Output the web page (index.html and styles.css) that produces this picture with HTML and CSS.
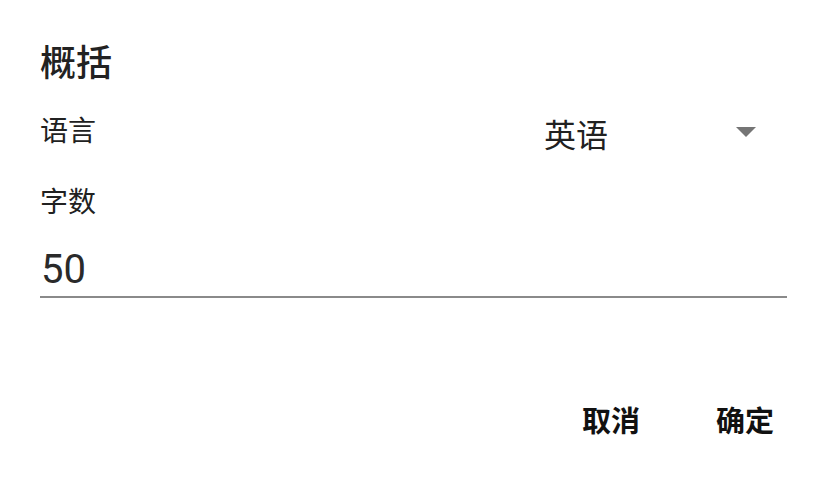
FILE: index.html
```html
<!DOCTYPE html>
<html lang="zh-CN">
<head>
<meta charset="utf-8">
<title>概括</title>
<link rel="stylesheet" href="styles.css">
</head>
<body>
<div class="dialog">
  <h1 class="title">概括</h1>
  <div class="row">
    <span class="label">语言</span>
    <div class="select">
      <span class="select-value">英语</span>
      <span class="caret"></span>
    </div>
  </div>
  <div class="label field-label">字数</div>
  <div class="input">50</div>
  <div class="actions">
    <button class="btn">取消</button>
    <button class="btn">确定</button>
  </div>
</div>
</body>
</html>
```

FILE: styles.css
```css
html, body {
  margin: 0;
  padding: 0;
  background: #ffffff;
}

body {
  font-family: "Noto Sans CJK SC", "Noto Sans", sans-serif;
  color: #212121;
}

.dialog {
  width: 747px;
  padding: 40px 0 0 40px;
}

.title {
  margin: 0;
  font-size: 36px;
  line-height: 40px;
  font-weight: 500;
  color: #222222;
}

.row {
  display: flex;
  align-items: flex-start;
  justify-content: space-between;
  margin-top: 33px;
}

.label {
  font-size: 28px;
  line-height: 32px;
  color: #212121;
}

.select {
  width: 243px;
  display: flex;
  align-items: center;
  justify-content: space-between;
  padding-right: 31px;
  box-sizing: border-box;
}

.select-value {
  font-size: 32px;
  line-height: 40px;
  color: #212121;
}

.caret {
  width: 0;
  height: 0;
  border-left: 10px solid transparent;
  border-right: 10px solid transparent;
  border-top: 10px solid #757575;
  margin-top: -2px;
}

.field-label {
  margin-top: 31px;
}

.input {
  margin-top: 30px;
  font-family: Roboto, "Noto Sans", sans-serif;
  font-size: 40px;
  line-height: 48px;
  color: #2a2a2a;
  padding: 0 0 2px 1px;
  border-bottom: 2px solid #8a8a8a;
}

.actions {
  display: flex;
  justify-content: flex-end;
  gap: 48px;
  margin-top: 103px;
  margin-right: -1px;
}

.btn {
  font-family: "Noto Sans CJK SC", sans-serif;
  font-size: 29px;
  line-height: 36px;
  font-weight: 700;
  color: #111111;
  background: none;
  border: none;
  padding: 0 14px;
  margin: 0;
}
```
